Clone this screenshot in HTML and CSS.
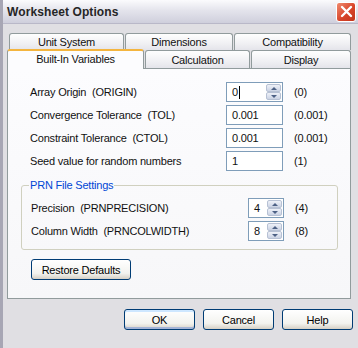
FILE: index.html
```html
<!DOCTYPE html>
<html lang="en">
<head>
  <meta charset="UTF-8">
  <title>Worksheet Options</title>
  <link rel="stylesheet" href="styles.css">
</head>
<body>
  <div class="window">
    <div class="titlebar">
      <span class="title">Worksheet Options</span>
      <span class="close">
        <svg width="13" height="13" viewBox="0 0 13 13"><path d="M2 2 L11 11 M11 2 L2 11" stroke="#fff" stroke-width="2.4" stroke-linecap="round"/></svg>
      </span>
    </div>

    <div class="content">
      <!-- onglets, deux rangées -->
      <div class="tabrow back">
        <div class="tab w1">Unit System</div>
        <div class="tab w2">Dimensions</div>
        <div class="tab w3">Compatibility</div>
      </div>
      <div class="tabrow front">
        <div class="tab active w4">Built-In Variables</div>
        <div class="tab w5">Calculation</div>
        <div class="tab w6">Display</div>
      </div>

      <div class="panel">
        <div class="row">
          <span class="label">Array Origin&nbsp; (ORIGIN)</span>
          <span class="field spin"><span class="val">0<i class="caret"></i></span><span class="spinner"><b class="up"></b><b class="down"></b></span></span>
          <span class="def">(0)</span>
        </div>
        <div class="row">
          <span class="label">Convergence Tolerance&nbsp; (TOL)</span>
          <span class="field">0.001</span>
          <span class="def">(0.001)</span>
        </div>
        <div class="row">
          <span class="label">Constraint Tolerance&nbsp; (CTOL)</span>
          <span class="field">0.001</span>
          <span class="def">(0.001)</span>
        </div>
        <div class="row">
          <span class="label">Seed value for random numbers</span>
          <span class="field">1</span>
          <span class="def">(1)</span>
        </div>

        <fieldset class="group">
          <legend>PRN File Settings</legend>
          <div class="row">
            <span class="label">Precision&nbsp; (PRNPRECISION)</span>
            <span class="field small spin"><span class="val">4</span><span class="spinner"><b class="up"></b><b class="down"></b></span></span>
            <span class="def">(4)</span>
          </div>
          <div class="row">
            <span class="label">Column Width&nbsp; (PRNCOLWIDTH)</span>
            <span class="field small spin"><span class="val">8</span><span class="spinner"><b class="up"></b><b class="down"></b></span></span>
            <span class="def">(8)</span>
          </div>
        </fieldset>

        <button class="btn restore">Restore Defaults</button>
      </div>

      <div class="buttons">
        <button class="btn ok">OK</button>
        <button class="btn">Cancel</button>
        <button class="btn">Help</button>
      </div>
    </div>
  </div>
</body>
</html>
```

FILE: styles.css
```css
body {
  margin: 0;
  font-family: "Liberation Sans", Arial, sans-serif;
  font-size: 11px;
  letter-spacing: -0.2px;
  color: #111;
  background: #e0dfe3;
}
.window {
  width: 358px;
  height: 348px;
  background: #e0dfe3;
  border-left: 3px solid #a7a6b4;
  box-sizing: border-box;
  overflow: hidden;
}
.titlebar {
  height: 23px;
  display: flex;
  align-items: center;
  justify-content: space-between;
  padding: 0 2px 0 2px;
  background: linear-gradient(#fbfbfd, #e4e4ec 45%, #cfcfdc);
  border-bottom: 1px solid #b9b8c8;
  margin-left: -3px;
}
.title {
  font-weight: bold;
  font-size: 12px;
  color: #262626;
  padding-left: 5px;
  letter-spacing: 0.1px;
}
.close {
  width: 20px;
  height: 20px;
  border-radius: 3px;
  border: 1px solid #fff;
  box-sizing: border-box;
  background: linear-gradient(135deg, #f08b70, #d8452a 55%, #c2351c);
  display: flex;
  align-items: center;
  justify-content: center;
}

.content {
  padding: 9px 4px 0 4px;
}

/* onglets */
.tabrow {
  display: flex;
  align-items: flex-end;
}
.tabrow.back {
  padding-left: 2px;
  height: 17px;
}
.tabrow.front {
  height: 19px;
  margin-top: -1px;
  position: relative;
  z-index: 1;
}
.tab {
  height: 17px;
  box-sizing: border-box;
  border: 1px solid #919b9c;
  border-bottom: none;
  border-radius: 3px 3px 0 0;
  background: linear-gradient(#fefefe, #f0f0f3 60%, #e4e4ea);
  display: flex;
  align-items: center;
  justify-content: center;
  margin-right: 1px;
}
.tabrow.front .tab { height: 18px; }
.tab.active {
  height: 20px !important;
  background: #fcfcfe;
  border-top: 2px solid #f4b53f;
  padding-bottom: 3px;
  margin-bottom: -1px;
}
.w1 { width: 115px; }
.w2 { width: 108px; }
.w3 { width: 117px; }
.w4 { width: 137px; }
.w5 { width: 105px; }
.w6 { width: 100px; }

.panel {
  width: 344px;
  height: 231px;
  box-sizing: border-box;
  border: 1px solid #919b9c;
  background: linear-gradient(#fcfcfe, #f7f7f9);
  padding: 13px 0 0 22px;
}

.row {
  display: flex;
  align-items: center;
  height: 20px;
  margin-bottom: 3px;
}
.label {
  width: 196px;
}
.field {
  width: 57px;
  height: 20px;
  box-sizing: border-box;
  border: 1px solid #7f9db9;
  background: #fff;
  display: flex;
  align-items: center;
  padding-left: 5px;
}
.field.spin {
  justify-content: space-between;
  padding-right: 1px;
}
.val {
  display: flex;
  align-items: center;
}
.caret {
  width: 1px;
  height: 13px;
  background: #000;
  margin-left: 1px;
}
.spinner {
  width: 15px;
  height: 16px;
  display: flex;
  flex-direction: column;
}
.spinner b {
  flex: 1;
  border: 1px solid #b7c1d4;
  border-radius: 2px;
  background: linear-gradient(#eef1f8, #cbd3e4);
  position: relative;
}
.spinner b::after {
  content: "";
  position: absolute;
  left: 4px;
  top: 2px;
  border-left: 3px solid transparent;
  border-right: 3px solid transparent;
}
.spinner .up::after { border-bottom: 3px solid #4d6185; }
.spinner .down::after { border-top: 3px solid #4d6185; }
.def {
  margin-left: 11px;
}

.group {
  margin: 8px 0 0 -9px;
  width: 317px;
  height: 71px;
  box-sizing: border-box;
  border: 1px solid #d0d0bf;
  border-radius: 3px;
  padding: 7px 0 0 9px;
}
.group legend {
  color: #0046d5;
  padding: 0 1px;
  margin-left: -2px;
}
.group .label { width: 217px; }
.field.small { width: 36px; }

.btn {
  font-family: inherit;
  font-size: 11px;
  letter-spacing: -0.2px;
  color: #000;
  height: 21px;
  box-sizing: border-box;
  border: 1px solid #003c74;
  border-radius: 3px;
  background: linear-gradient(#ffffff, #f3f3ef 70%, #d6d0c5);
  padding: 0;
}
.restore {
  display: block;
  width: 100px;
  margin: 9px 0 0 1px;
}
.buttons {
  display: flex;
  gap: 8px;
  padding: 10px 0 0 117px;
}
.buttons .btn { width: 71px; }
.buttons .ok {
  box-shadow: inset 0 -2px 0 #a5b4d6, inset 0 2px 0 #cee7ff;
}
```
